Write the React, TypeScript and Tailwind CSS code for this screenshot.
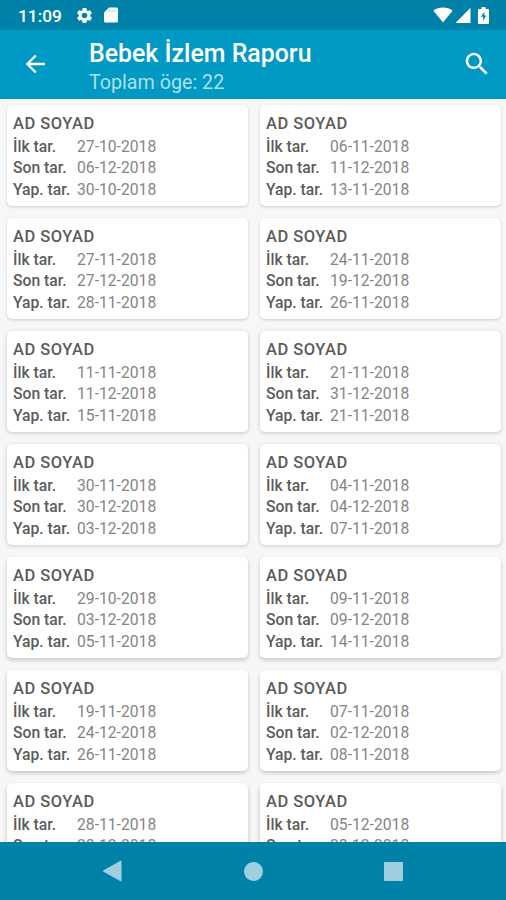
import React from 'react';

interface Visit {
  first: string;
  last: string;
  done: string;
}

const visits: Visit[] = [
  { first: '27-10-2018', last: '06-12-2018', done: '30-10-2018' },
  { first: '06-11-2018', last: '11-12-2018', done: '13-11-2018' },
  { first: '27-11-2018', last: '27-12-2018', done: '28-11-2018' },
  { first: '24-11-2018', last: '19-12-2018', done: '26-11-2018' },
  { first: '11-11-2018', last: '11-12-2018', done: '15-11-2018' },
  { first: '21-11-2018', last: '31-12-2018', done: '21-11-2018' },
  { first: '30-11-2018', last: '30-12-2018', done: '03-12-2018' },
  { first: '04-11-2018', last: '04-12-2018', done: '07-11-2018' },
  { first: '29-10-2018', last: '03-12-2018', done: '05-11-2018' },
  { first: '09-11-2018', last: '09-12-2018', done: '14-11-2018' },
  { first: '19-11-2018', last: '24-12-2018', done: '26-11-2018' },
  { first: '07-11-2018', last: '02-12-2018', done: '08-11-2018' },
  { first: '28-11-2018', last: '28-12-2018', done: '30-11-2018' },
  { first: '05-12-2018', last: '28-12-2018', done: '10-12-2018' },
];

// cards further down the list cast a longer shadow
const shadows = [
  'shadow-[0_1px_3px_rgba(0,0,0,0.18)]',
  'shadow-[0_1px_4px_rgba(0,0,0,0.2)]',
  'shadow-[0_2px_4px_rgba(0,0,0,0.2)]',
  'shadow-[0_3px_5px_rgba(0,0,0,0.22)]',
];

function StatusBar() {
  return (
    <div className="flex h-[30px] shrink-0 items-center bg-[#0081a8] pl-[18px] pr-[17px] text-white">
      <span className="w-[57px] pt-[3px] text-[17.3px] leading-none font-medium">11:09</span>
      <svg viewBox="0 0 24 24" className="h-[19px] w-[19px]" fill="currentColor">
        <path d="M19.14 12.94c.04-.3.06-.61.06-.94 0-.32-.02-.64-.07-.94l2.03-1.58c.18-.14.23-.41.12-.61l-1.92-3.32c-.12-.22-.37-.29-.59-.22l-2.39.96c-.5-.38-1.03-.7-1.62-.94l-.36-2.54c-.04-.24-.24-.41-.48-.41h-3.84c-.24 0-.43.17-.47.41l-.36 2.54c-.59.24-1.13.57-1.62.94l-2.39-.96c-.22-.08-.47 0-.59.22L2.74 8.87c-.12.21-.08.47.12.61l2.03 1.58c-.05.3-.09.63-.09.94s.02.64.07.94l-2.03 1.58c-.18.14-.23.41-.12.61l1.92 3.32c.12.22.37.29.59.22l2.39-.96c.5.38 1.03.7 1.62.94l.36 2.54c.05.24.24.41.48.41h3.84c.24 0 .44-.17.47-.41l.36-2.54c.59-.24 1.13-.56 1.62-.94l2.39.96c.22.08.47 0 .59-.22l1.92-3.32c.12-.22.07-.47-.12-.61l-2.01-1.58zM12 15.6c-1.98 0-3.6-1.62-3.6-3.6s1.62-3.6 3.6-3.6 3.6 1.62 3.6 3.6-1.62 3.6-3.6 3.6z" />
      </svg>
      <svg viewBox="0 0 14 16" className="ml-[10px] h-4 w-[14px]">
        <path fill="currentColor" d="M5 .5h7.5A1.5 1.5 0 0 1 14 2v12a1.5 1.5 0 0 1-1.5 1.5h-11A1.5 1.5 0 0 1 0 14V5.5z" />
        <path stroke="#0081a8" strokeWidth="1.1" d="M5.5 2.5v2.5M8.2 2.5v2.5M10.9 2.5v2.5" opacity=".35" />
      </svg>
      <div className="ml-auto flex items-center">
        <svg viewBox="0 0 20 16" className="h-4 w-5" fill="currentColor">
          <path d="M10 15.5.5 3.7C3 1.7 6.3.5 10 .5s7 1.2 9.5 3.2z" />
        </svg>
        <svg viewBox="0 0 16 16" className="ml-[2px] h-4 w-4" fill="currentColor">
          <path d="M.5 16 15.5.8V16z" />
        </svg>
        <svg viewBox="0 0 11 17" className="ml-[7px] h-[17px] w-[11px]">
          <path fill="currentColor" d="M3.5 0h4v2H10q1 0 1 1v13q0 1-1 1H1q-1 0-1-1V3q0-1 1-1h2.5z" />
          <path fill="#0081a8" d="M6.3 4.8 3 9.8h2.2V14l3-5.4H6.3z" />
        </svg>
      </div>
    </div>
  );
}

function AppBar() {
  return (
    <header className="flex h-[68.5px] shrink-0 bg-[#0099c3] text-white">
      <button className="ml-[21px] mt-[20px] h-7 w-7" aria-label="Geri">
        <svg viewBox="0 0 24 24" className="h-7 w-7" fill="currentColor">
          <path d="M20.5 11H7.83l5.59-5.59L12 4l-8 8 8 8 1.41-1.41L7.83 13H20.5v-2z" />
        </svg>
      </button>
      <div className="ml-[40px] pt-[9px]">
        <h1 className="text-[24.9px] leading-[29px] font-medium whitespace-nowrap">Bebek İzlem Raporu</h1>
        <p className="text-[19.7px] leading-[30px] text-[#abe0ef]">Toplam öge: 22</p>
      </div>
      <button className="ml-auto mr-[14px] mt-[19px] h-[30px] w-[30px]" aria-label="Ara">
        <svg viewBox="0 0 24 24" className="h-[30px] w-[30px]" fill="currentColor">
          <path d="M15.5 14h-.79l-.28-.27C15.41 12.59 16 11.11 16 9.5 16 5.91 13.09 3 9.5 3S3 5.91 3 9.5 5.91 16 9.5 16c1.61 0 3.09-.59 4.23-1.57l.27.28v.79l5 4.99L20.49 19l-4.99-5zm-6 0C7.01 14 5 11.99 5 9.5S7.01 5 9.5 5 14 7.01 14 9.5 11.99 14 9.5 14z" />
        </svg>
      </button>
    </header>
  );
}

function Row({ label, value }: { label: string; value: string }) {
  return (
    <div className="flex whitespace-nowrap">
      <span className="w-16 font-medium text-[#5c5c5c]">{label}</span>
      <span className="text-[15.7px] text-[#858585]">{value}</span>
    </div>
  );
}

function VisitCard({ visit, shadow }: { visit: Visit; shadow: string }) {
  return (
    <div className={`h-[101px] rounded-[5px] bg-white px-[6px] pt-[8px] text-[15.7px] leading-[21.6px] ${shadow}`}>
      <div className="mb-px text-[16.5px] font-medium tracking-[0.5px] text-[#5c5c5c]">AD SOYAD</div>
      <Row label="İlk tar." value={visit.first} />
      <Row label="Son tar." value={visit.last} />
      <Row label="Yap. tar." value={visit.done} />
    </div>
  );
}

function NavBar() {
  return (
    <nav className="flex h-[58px] shrink-0 items-center bg-[#0081a8] pl-[102px] text-[#9fcfdf]">
      <svg viewBox="0 0 20 22" className="h-[22px] w-5" fill="currentColor">
        <path d="M18.5.8q1-.4 1 .6v19.2q0 1-1 .6L1.5 11.8q-1-.8 0-1.6z" />
      </svg>
      <div className="ml-[122px] h-[19px] w-[19px] rounded-full bg-[#9fcfdf]" />
      <div className="ml-[121px] h-[19px] w-[19px] rounded-[1px] bg-[#9fcfdf]" />
    </nav>
  );
}

export default function App() {
  return (
    <div className="flex h-[900px] w-[506px] flex-col overflow-hidden bg-[#f7f7f7] font-[Roboto,sans-serif]">
      <StatusBar />
      <AppBar />
      <main className="min-h-0 flex-1 overflow-hidden pt-[6.5px] pr-[5px] pl-[7px]">
        <div className="grid grid-cols-2 gap-x-[12px] gap-y-[12px]">
          {visits.map((visit, i) => (
            <VisitCard key={i} visit={visit} shadow={shadows[Math.min(Math.floor(i / 4), 3)]} />
          ))}
        </div>
      </main>
      <NavBar />
    </div>
  );
}
